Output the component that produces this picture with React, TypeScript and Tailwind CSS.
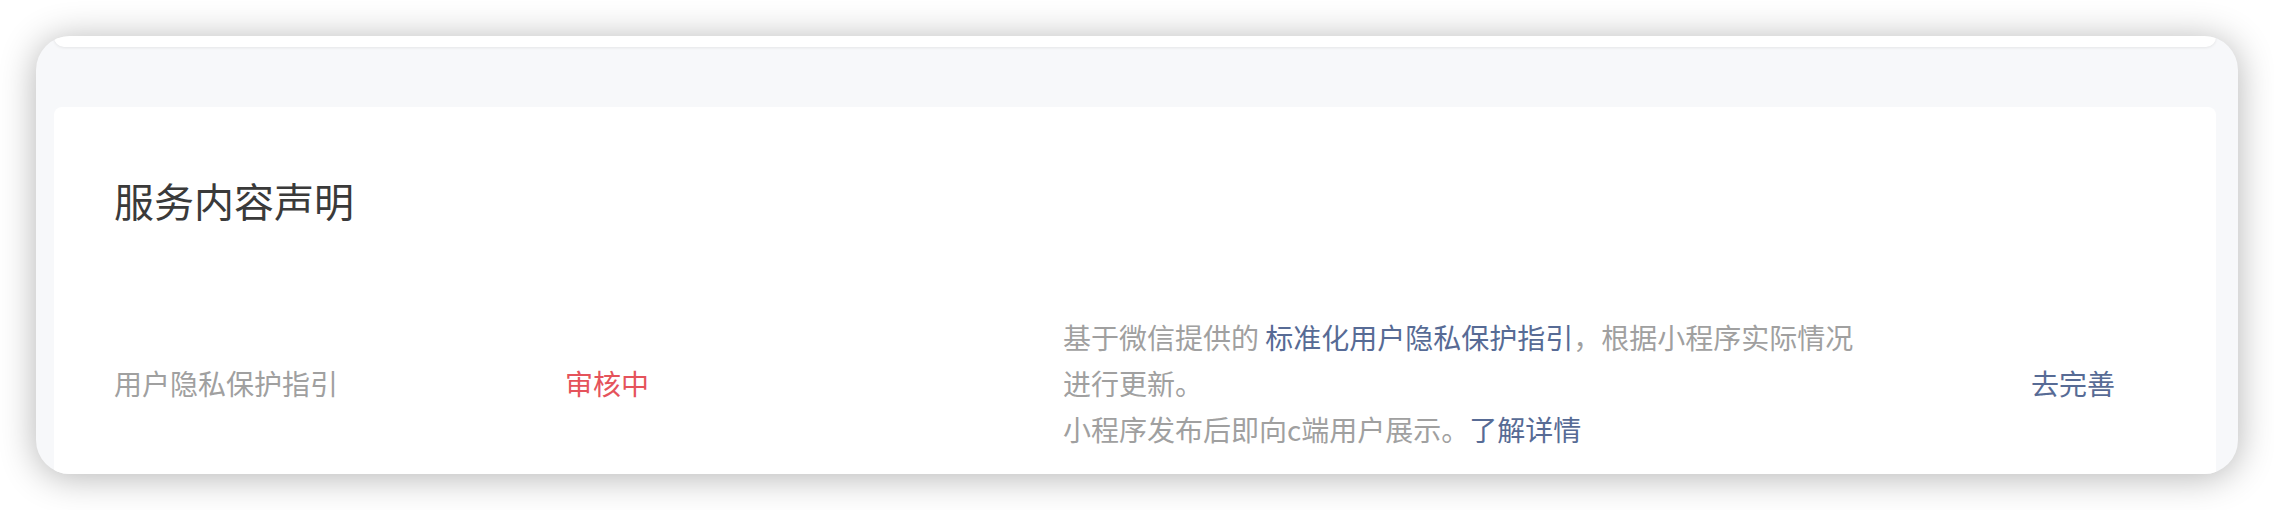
export default function App() {
  const font = { fontFamily: "'Noto Sans CJK SC', 'Noto Sans', sans-serif" };

  return (
    <div className="min-h-screen bg-white pt-[36px] pl-[36px]" style={font}>
      <div className="w-[2202px] h-[438px] rounded-[34px] bg-[#f7f8fa] overflow-hidden shadow-[0_3px_36px_rgba(0,0,0,0.3)] flex flex-col pl-[18px] pr-[22px]">
        {/* previous card, scrolled almost out of view */}
        <div className="h-[11px] shrink-0 bg-white rounded-b-[10px] shadow-[0_1px_3px_rgba(0,0,0,0.08)]" />

        <div className="mt-[60px] flex-1 bg-white rounded-t-[8px] pl-[60px] pt-[65px]">
          <h2 className="text-[40px] leading-[56px] text-[#3a3a3a] font-normal">服务内容声明</h2>

          <div className="mt-[86px] grid grid-cols-[451px_498px_968px_auto] items-center text-[28px] leading-[46px]">
            <div className="text-[#a0a0a0]">用户隐私保护指引</div>
            <div className="text-[#e5535b]">审核中</div>
            <div className="text-[#a0a0a0] max-w-[800px]">
              <p>
                基于微信提供的 <span className="text-[#576b95]">标准化用户隐私保护指引</span>，根据小程序实际情况进行更新。
              </p>
              <p>
                小程序发布后即向c端用户展示。<span className="text-[#576b95]">了解详情</span>
              </p>
            </div>
            <div className="text-[#576b95]">去完善</div>
          </div>
        </div>
      </div>
    </div>
  );
}
